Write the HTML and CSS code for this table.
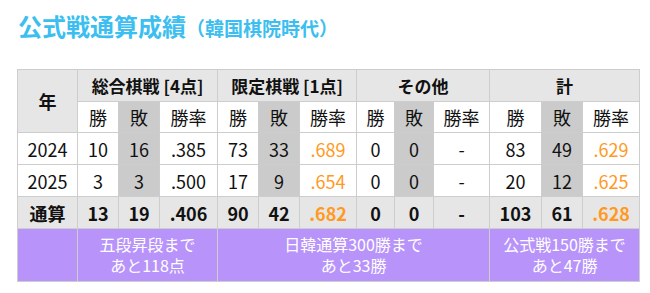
FILE: index.html
```html
<!DOCTYPE html>
<html lang="ja">
<head>
<meta charset="utf-8">
<link rel="stylesheet" href="styles.css">
</head>
<body>
<div class="page">
  <h2 class="title">公式戦通算成績<span class="sub">（韓国棋院時代）</span></h2>
  <table class="stats">
    <colgroup>
      <col style="width:60px"><col style="width:41px"><col style="width:41px"><col style="width:58px">
      <col style="width:41px"><col style="width:41px"><col style="width:57px">
      <col style="width:38px"><col style="width:39px"><col style="width:56px">
      <col style="width:52px"><col style="width:41px"><col style="width:57px">
    </colgroup>
    <thead>
      <tr class="h1">
        <th rowspan="2" class="year">年</th>
        <th colspan="3">総合棋戦 [4点]</th>
        <th colspan="3">限定棋戦 [1点]</th>
        <th colspan="3">その他</th>
        <th colspan="3">計</th>
      </tr>
      <tr class="h2">
        <td>勝</td><td class="loss">敗</td><td>勝率</td>
        <td>勝</td><td class="loss">敗</td><td>勝率</td>
        <td>勝</td><td class="loss">敗</td><td>勝率</td>
        <td>勝</td><td class="loss">敗</td><td>勝率</td>
      </tr>
    </thead>
    <tbody>
      <tr>
        <td>2024</td>
        <td>10</td><td class="loss">16</td><td>.385</td>
        <td>73</td><td class="loss">33</td><td class="hi">.689</td>
        <td>0</td><td class="loss">0</td><td>-</td>
        <td>83</td><td class="loss">49</td><td class="hi">.629</td>
      </tr>
      <tr>
        <td>2025</td>
        <td>3</td><td class="loss">3</td><td>.500</td>
        <td>17</td><td class="loss">9</td><td class="hi">.654</td>
        <td>0</td><td class="loss">0</td><td>-</td>
        <td>20</td><td class="loss">12</td><td class="hi">.625</td>
      </tr>
      <tr class="total">
        <td>通算</td>
        <td>13</td><td>19</td><td>.406</td>
        <td>90</td><td>42</td><td class="hi">.682</td>
        <td>0</td><td>0</td><td>-</td>
        <td>103</td><td>61</td><td class="hi">.628</td>
      </tr>
      <tr class="goal">
        <td></td>
        <td colspan="3"><span class="ln">五段昇段まで</span><span class="ln">あと118点</span></td>
        <td colspan="6"><span class="ln">日韓通算300勝まで</span><span class="ln">あと33勝</span></td>
        <td colspan="3"><span class="ln">公式戦150勝まで</span><span class="ln">あと47勝</span></td>
      </tr>
    </tbody>
  </table>
</div>
</body>
</html>
```

FILE: styles.css
```css
html, body {
  margin: 0;
  padding: 0;
  background: #fff;
}
body {
  font-family: "Noto Sans CJK JP", "Noto Sans", sans-serif;
  color: #111;
}
.page {
  padding: 10px 11px 0 17px;
}
.title {
  margin: 0 0 0 1px;
  font-size: 24px;
  font-weight: 700;
  line-height: 32px;
  color: #3cbff0;
  height: 32px;
}
.title .sub {
  font-size: 19px;
}
.stats {
  margin-top: 27px;
  border-collapse: collapse;
  table-layout: fixed;
  width: 622px;
  font-size: 18px;
  text-align: center;
}
.stats th, .stats td {
  border: 1px solid #cdcdcd;
  padding: 0;
  text-align: center;
  white-space: nowrap;
}
.stats th {
  background: #e6e6e6;
  font-weight: 700;
  font-size: 17px;
}
.h1 th {
  height: 31px;
}
.h1 th.year {
  font-size: 18px;
}
.h2 td {
  height: 30px;
  background: #fff;
}
.stats tbody td {
  height: 31px;
}
.stats td.loss {
  background: #cbcbcb;
}
.stats td.hi {
  color: #ff9a1f;
}
.total td {
  background: #e6e6e6;
  font-weight: 700;
}
.stats .total td {
  height: 31px;
}
.stats .goal td {
  background: #b894fa;
  color: #fff;
  font-size: 16px;
  line-height: 21px;
  height: 52px;
}
.goal .ln {
  display: block;
}
```
